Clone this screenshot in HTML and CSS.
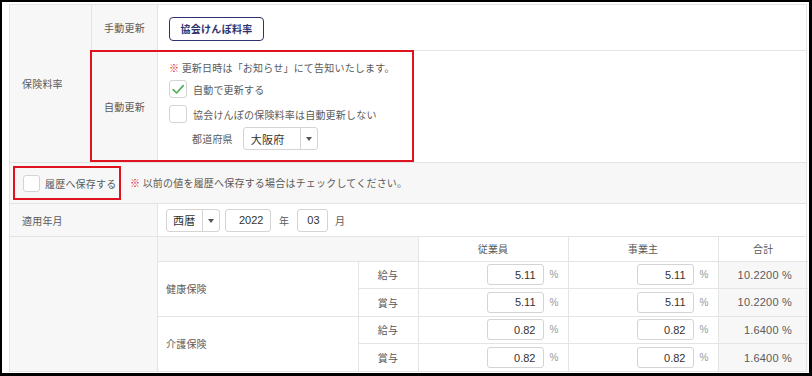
FILE: index.html
```html
<!DOCTYPE html>
<html lang="ja">
<head>
  <meta charset="UTF-8" />
  <title>保険料率</title>
  <link rel="stylesheet" href="styles.css">
</head>
<body>

<div class="frame">
  <table class="form">
    <colgroup>
      <col class="c-label">
      <col class="c-sub">
      <col class="c-value">
    </colgroup>
    <tr class="r-manual">
      <th rowspan="2" class="label">保険料率</th>
      <th class="sub">手動更新</th>
      <td class="value"><button class="btn">協会けんぽ料率</button></td>
    </tr>
    <tr class="r-auto">
      <th class="sub">自動更新</th>
      <td class="value auto">
        <div class="highlight"></div>
        <p class="note"><span class="mark">※</span> 更新日時は「お知らせ」にて告知いたします。</p>
        <label class="check">
          <span class="box">
            <svg width="16" height="16" viewBox="0 0 16 16"><path d="M3.2 8.6 L6.6 12 L13.2 4.6" fill="none" stroke="#4fae53" stroke-width="1.6" stroke-linecap="round" stroke-linejoin="round"/></svg>
          </span>
          自動で更新する
        </label>
        <label class="check">
          <span class="box"></span>
          協会けんぽの保険料率は自動更新しない
        </label>
        <div class="pref-row">
          <span class="pref-label">都道府県</span>
          <span class="select pref"><span class="val">大阪府</span><span class="caret"></span></span>
        </div>
      </td>
    </tr>
    <tr class="r-history">
      <td colspan="3" class="history">
        <div class="history-line">
          <label class="check boxed"><span class="box"></span>履歴へ保存する</label>
          <span class="note"><span class="mark">※</span> 以前の値を履歴へ保存する場合はチェックしてください。</span>
        </div>
      </td>
    </tr>
    <tr class="r-date">
      <th colspan="2" class="label">適用年月</th>
      <td class="value date">
        <span class="select era"><span class="val">西暦</span><span class="caret"></span></span>
        <span class="input year">2022</span>
        <span class="unit">年</span>
        <span class="input month">03</span>
        <span class="unit">月</span>
      </td>
    </tr>
    <tr class="r-rates">
      <th colspan="2" class="label"></th>
      <td class="nested">
        <table class="rates">
          <colgroup>
            <col class="c-kind">
            <col class="c-type">
            <col class="c-emp">
            <col class="c-emp">
            <col class="c-total">
          </colgroup>
          <tr class="head">
            <th colspan="2" class="blank"></th>
            <th>従業員</th>
            <th>事業主</th>
            <th>合計</th>
          </tr>
          <tr>
            <td rowspan="2" class="kind">健康保険</td>
            <td class="type">給与</td>
            <td class="num"><span class="input">5.11</span><span class="pct">%</span></td>
            <td class="num"><span class="input">5.11</span><span class="pct">%</span></td>
            <td class="total">10.2200 %</td>
          </tr>
          <tr>
            <td class="type">賞与</td>
            <td class="num"><span class="input">5.11</span><span class="pct">%</span></td>
            <td class="num"><span class="input">5.11</span><span class="pct">%</span></td>
            <td class="total">10.2200 %</td>
          </tr>
          <tr>
            <td rowspan="2" class="kind">介護保険</td>
            <td class="type">給与</td>
            <td class="num"><span class="input">0.82</span><span class="pct">%</span></td>
            <td class="num"><span class="input">0.82</span><span class="pct">%</span></td>
            <td class="total">1.6400 %</td>
          </tr>
          <tr>
            <td class="type">賞与</td>
            <td class="num"><span class="input">0.82</span><span class="pct">%</span></td>
            <td class="num"><span class="input">0.82</span><span class="pct">%</span></td>
            <td class="total">1.6400 %</td>
          </tr>
        </table>
      </td>
    </tr>
  </table>
</div>

</body>
</html>
```

FILE: styles.css
```css
:root {
  --line: #e4e4e4;
  --gray-bg: #f7f7f7;
  --text: #5a5a5a;
  --dark: #333333;
  --red: #e0141e;
  --navy: #2e3370;
}

* {
  box-sizing: border-box;
}

body {
  margin: 0;
  font-family: "Noto Sans CJK JP", "Noto Sans", sans-serif;
  font-size: 10px;
  letter-spacing: 0.2px;
  color: var(--text);
  background: #fff;
}

.frame {
  width: 812px;
  height: 376px;
  border-style: solid;
  border-color: #000;
  border-width: 2px 3px 3px 2px;
  padding: 2px 2px 0 7px;
  overflow: hidden;
}

.form {
  width: 798px;
  border-collapse: collapse;
  table-layout: fixed;
}

.form .c-label { width: 82px; }
.form .c-sub { width: 66px; }

.form > tbody > tr > th,
.form > tbody > tr > td {
  border: 1px solid var(--line);
  padding: 0;
  font-weight: normal;
  text-align: left;
}

.form th {
  background: var(--gray-bg);
}

.form th.label {
  padding-left: 12px;
}

.form th.sub {
  text-align: center;
}

.r-manual { height: 46px; }
.r-auto { height: 112px; }
.r-history { height: 41px; }
.r-date { height: 33px; }

.value {
  padding-left: 11px !important;
}

.btn {
  font-family: inherit;
  font-size: 10px;
  font-weight: bold;
  letter-spacing: 0.3px;
  color: var(--navy);
  background: #fff;
  border: 1.5px solid var(--navy);
  border-radius: 4px;
  width: 95px;
  height: 24px;
  padding: 0;
  margin-top: 2px;
}

/* auto update block */
.auto {
  position: relative;
  vertical-align: top;
  padding-top: 10px !important;
}

.highlight {
  position: absolute;
  left: -68px;
  top: -1px;
  width: 324px;
  height: 112px;
  border: 2px solid var(--red);
  pointer-events: none;
}

.note {
  margin: 0;
  line-height: 14px;
}

.mark {
  color: var(--red);
  font-weight: bold;
}

.check {
  display: flex;
  align-items: center;
  gap: 6px;
  height: 18px;
}

.auto .check {
  margin-top: 5px;
}

.auto .check + .check {
  margin-top: 7px;
}

.box {
  width: 18px;
  height: 18px;
  border: 1px solid #d4d4d4;
  border-radius: 3px;
  background: #fff;
  display: flex;
  align-items: center;
  justify-content: center;
}

.pref-row {
  display: flex;
  align-items: center;
  gap: 10px;
  margin-top: 4px;
  padding-left: 23px;
}

.select {
  display: inline-flex;
  height: 23px;
  border: 1px solid #d4d4d4;
  border-radius: 3px;
  background: #fff;
  color: var(--dark);
  font-size: 11px;
}

.select .val {
  display: flex;
  align-items: center;
}

.select .caret {
  width: 17px;
  border-left: 1px solid #d4d4d4;
  position: relative;
}

.select .caret::after {
  content: "";
  position: absolute;
  left: 5px;
  top: 9px;
  border-top: 4px solid #555;
  border-left: 3px solid transparent;
  border-right: 3px solid transparent;
}

.pref {
  width: 75px;
}

.pref .val {
  width: 57px;
  padding-left: 7px;
}

/* history row */
.form > tbody > tr > td.history {
  background: var(--gray-bg);
  padding: 0 0 0 3px;
}

.history-line {
  display: flex;
  align-items: center;
  gap: 9px;
}

.check.boxed {
  height: 34px;
  width: 108px;
  border: 2px solid var(--red);
  padding-left: 8px;
  gap: 5px;
}

.check.boxed .box {
  width: 17px;
  height: 17px;
}

/* date row */
.date {
  padding-left: 8px !important;
}

.date > * {
  vertical-align: middle;
}

.era {
  width: 54px;
}

.era .val {
  width: 36px;
  padding-left: 6px;
}

.input {
  display: inline-flex;
  align-items: center;
  justify-content: flex-end;
  height: 23px;
  border: 1px solid #d4d4d4;
  border-radius: 3px;
  background: #fff;
  color: var(--dark);
  font-family: "Liberation Sans", Arial, sans-serif;
  font-size: 11px;
  letter-spacing: 0;
  padding-right: 7px;
}

.year {
  width: 46px;
  margin-left: 3px;
}

.month {
  width: 31px;
}

.unit {
  display: inline-block;
  margin: 0 5px 0 5px;
}

/* rates table */
.form > tbody > tr > td.nested {
  padding: 0;
  vertical-align: top;
}

.rates {
  width: 650px;
  border-collapse: collapse;
  border-style: hidden;
  table-layout: fixed;
}

.rates .c-kind { width: 200px; }
.rates .c-type { width: 60px; }
.rates .c-emp { width: 150px; }
.rates .c-total { width: 90px; }

.rates th,
.rates td {
  border: 1px solid var(--line);
  padding: 0;
  font-weight: normal;
}

.rates .head {
  height: 24px;
}

.rates .head th {
  background: #fff;
  text-align: center;
}

.rates .head th.blank {
  background: var(--gray-bg);
}

.rates tr {
  height: 27.5px;
}

.rates .kind {
  padding-left: 8px;
}

.rates .type {
  text-align: center;
}

.rates .num {
  text-align: right;
  padding-right: 9px;
}

.rates .num .input {
  width: 57px;
  height: 21px;
  vertical-align: middle;
}

.rates .pct {
  display: inline-block;
  width: 15px;
  text-align: right;
  color: #999;
  font-family: "Liberation Sans", Arial, sans-serif;
  vertical-align: middle;
}

.rates .total {
  background: var(--gray-bg);
  text-align: right;
  padding-right: 16px;
  font-family: "Liberation Sans", Arial, sans-serif;
  font-size: 11px;
  letter-spacing: 0.2px;
}
```
